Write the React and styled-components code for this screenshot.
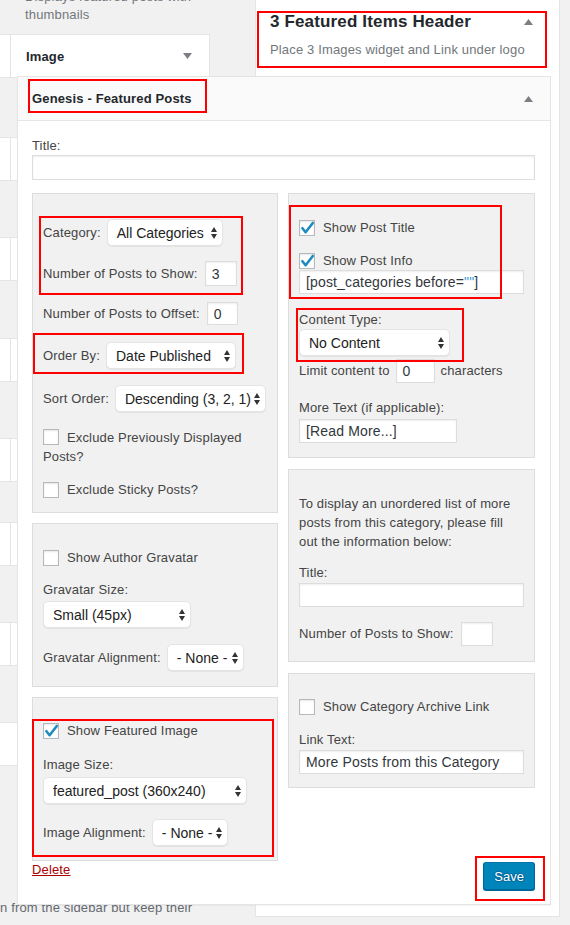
import React from 'react';
import styled, { createGlobalStyle } from 'styled-components';

const GlobalStyle = createGlobalStyle`
  html, body {
    margin: 0;
    padding: 0;
    background: #f1f1f1;
  }
  body {
    font-family: "Liberation Sans", Arial, sans-serif;
    font-size: 13px;
    letter-spacing: 0.15px;
    color: #444;
  }
  * {
    box-sizing: border-box;
  }
`;

const Page = styled.div`
  position: relative;
  width: 570px;
  height: 925px;
  overflow: hidden;
  display: flex;
  align-items: flex-start;
  background: #f1f1f1;
`;

/* available widgets, mostly hidden behind the open widget */
const Available = styled.div`
  width: 255px;
  height: 925px;
  flex-shrink: 0;
  display: flex;
  flex-direction: column;
  padding-bottom: 8px;
`;

const WidgetDesc = styled.p`
  margin: -12px 0 0;
  padding: 0 15px 0 25px;
  line-height: 18px;
  color: #72777c;
`;

const StubRow = styled.div`
  display: grid;
  grid-template-columns: 3px 200px;
  column-gap: 7px;
  height: 44px;
  margin-top: ${p => p.$mt}px;
`;

const Stub = styled.div`
  display: flex;
  align-items: center;
  justify-content: space-between;
  padding: 0 17px 0 15px;
  background: #fff;
  border: 1px solid #e5e5e5;
  border-left: ${p => (p.$edge ? 'none' : '1px solid #e5e5e5')};
  font-weight: bold;
  color: #23282d;
  visibility: ${p => (p.$empty ? 'hidden' : 'visible')};
`;

const BottomNote = styled.div`
  margin-top: auto;
  line-height: 18px;
  color: #646970;
  white-space: nowrap;
`;

/* sidebar */
const Sidebar = styled.div`
  width: 305px;
  flex-shrink: 0;
  background: #fff;
  border: 1px solid #e5e5e5;
  border-top: none;
  padding-bottom: 11px;
`;

const SidebarHead = styled.div`
  padding: 12px 26px 0 14px;
`;

const TitleRow = styled.div`
  display: flex;
  align-items: center;
  justify-content: space-between;
`;

const SidebarTitle = styled.h2`
  margin: 0;
  font-size: 17px;
  line-height: 20px;
  font-weight: bold;
  color: #23282d;
`;

const SidebarDesc = styled.p`
  margin: 9px 0 0;
  line-height: 18px;
  color: #72777c;
`;

const Panel = styled.div`
  width: 534px;
  margin: 17px 0 0 -239px;
  background: #fff;
  border: 1px solid #e5e5e5;
  box-shadow: 0 1px 1px rgba(0, 0, 0, 0.04);
`;

const PanelHead = styled.div`
  height: 44px;
  display: flex;
  align-items: center;
  justify-content: space-between;
  padding: 0 17px 0 14px;
  background: #fafafa;
  border-bottom: 1px solid #e5e5e5;
  font-weight: bold;
  color: #23282d;
`;

const PanelBody = styled.div`
  padding: 16px 15px 14px 14px;
`;

const Columns = styled.div`
  display: grid;
  grid-template-columns: 246px 247px;
  column-gap: 10px;
  align-items: start;
  margin-top: 13px;
`;

const Column = styled.div`
  display: flex;
  flex-direction: column;
  gap: ${p => p.$gap}px;
`;

const Box = styled.div`
  display: flex;
  flex-direction: column;
  align-items: flex-start;
  padding: ${p => p.$pt}px 10px ${p => p.$pb}px;
  background: #f1f1f1;
  border: 1px solid #ddd;
`;

const Row = styled.div`
  display: flex;
  align-items: center;
  gap: ${p => (p.$gap === undefined ? 6 : p.$gap)}px;
  margin-top: ${p => p.$mt || 0}px;
  line-height: 18px;
  white-space: nowrap;
`;

const Label = styled.div`
  margin-top: ${p => p.$mt || 0}px;
  line-height: 18px;
  color: #444;
`;

const Para = styled.p`
  margin: ${p => p.$mt || 0}px 0 0;
  line-height: 19px;
  color: #444;
`;

const InputBox = styled.div`
  display: flex;
  align-items: center;
  flex-shrink: 0;
  width: ${p => (p.$w ? `${p.$w}px` : '100%')};
  height: ${p => p.$h || 24}px;
  margin-top: ${p => p.$mt || 0}px;
  padding: 0 6px;
  background: #fff;
  border: 1px solid #ddd;
  box-shadow: inset 0 1px 2px rgba(0, 0, 0, 0.07);
  font-size: 14px;
  color: #32373c;
  white-space: nowrap;
  overflow: hidden;
`;

const Quote = styled.span`
  color: #3a9ad9;
`;

const SelectBox = styled.div`
  display: flex;
  align-items: center;
  justify-content: space-between;
  flex-shrink: 0;
  width: ${p => p.$w}px;
  height: 27px;
  margin-top: ${p => p.$mt || 0}px;
  padding: 0 5px 0 9px;
  background: #fff;
  border: 1px solid #e4e4e4;
  border-radius: 5px;
  box-shadow: 0 1px 1px rgba(0, 0, 0, 0.06);
  font-size: 14px;
  letter-spacing: 0;
  color: #222;
  white-space: nowrap;
`;

const CheckBox = styled.span`
  display: inline-block;
  flex-shrink: 0;
  width: 16px;
  height: 16px;
  background: #fff;
  border: 1px solid #b4b9be;
  box-shadow: inset 0 1px 2px rgba(0, 0, 0, 0.1);
  vertical-align: ${p => (p.$inline ? 'top' : 'middle')};
  margin: ${p => (p.$inline ? '1px 8px 0 0' : '0')};

  svg {
    display: block;
    margin: -1px 0 0 -1px;
    overflow: visible;
  }
`;

const Actions = styled.div`
  display: flex;
  align-items: flex-start;
  justify-content: space-between;
  margin-top: 1px;
`;

const DeleteLink = styled.a`
  line-height: 16px;
  color: #a00;
  text-decoration: underline;
  cursor: pointer;
`;

const SaveButton = styled.button`
  height: 28px;
  padding: 0 10px;
  font-family: inherit;
  font-size: 13px;
  color: #fff;
  background: #0085ba;
  border: 1px solid #0073aa;
  border-color: #0073aa #006799 #006799;
  border-radius: 3px;
  box-shadow: 0 1px 0 #006799;
  text-shadow: 0 -1px 1px #006799, 1px 0 1px #006799, 0 1px 1px #006799, -1px 0 1px #006799;
  cursor: pointer;
`;

const Annot = styled.div`
  position: absolute;
  left: ${p => p.$x}px;
  top: ${p => p.$y}px;
  width: ${p => p.$w}px;
  height: ${p => p.$h}px;
  border: 2px solid #f00;
  pointer-events: none;
`;

const Tri = ({ dir = 'up' }) => (
  <svg width="9" height="6" viewBox="0 0 9 6" aria-hidden="true">
    <path d={dir === 'up' ? 'M0 6 L4.5 0 L9 6 Z' : 'M0 0 L4.5 6 L9 0 Z'} fill="#7b7f84" />
  </svg>
);

const SelectArrows = () => (
  <svg width="6" height="12" viewBox="0 0 6 12" aria-hidden="true">
    <path d="M0 5 L3 0 L6 5 Z M0 7 L3 12 L6 7 Z" fill="#333" />
  </svg>
);

const Select = ({ w, mt, children }) => (
  <SelectBox $w={w} $mt={mt}>
    <span>{children}</span>
    <SelectArrows />
  </SelectBox>
);

const Check = ({ checked, inline }) => (
  <CheckBox $inline={inline}>
    {checked && (
      <svg width="16" height="16" viewBox="0 0 16 16" aria-hidden="true">
        <polyline
          points="3.4,8.2 6.6,12.2 13.8,3"
          fill="none"
          stroke="#1e8cbe"
          strokeWidth="2.6"
          strokeLinecap="round"
          strokeLinejoin="round"
        />
      </svg>
    )}
  </CheckBox>
);

const stubRows = [
  { mt: 10, label: 'Image' },
  { mt: 59 },
  { mt: 56 },
  { mt: 57 },
  { mt: 56 },
  { mt: 40 },
  { mt: 56 },
  { mt: 56, single: true },
];

const annotations = [
  { x: 257, y: 11, w: 290, h: 57 },
  { x: 28, y: 79, w: 179, h: 34 },
  { x: 39, y: 216, w: 204, h: 79 },
  { x: 33, y: 333, w: 211, h: 41 },
  { x: 289, y: 205, w: 213, h: 94 },
  { x: 296, y: 308, w: 168, h: 54 },
  { x: 32, y: 719, w: 242, h: 138 },
  { x: 475, y: 856, w: 70, h: 45 },
];

const App = () => (
  <>
    <GlobalStyle />
    <Page>
      <Available>
        <WidgetDesc>
          Displays featured posts with
          <br />
          thumbnails
        </WidgetDesc>
        {stubRows.map((row, i) => (
          <StubRow key={i} $mt={row.mt}>
            <Stub $edge />
            <Stub $empty={row.single}>
              {row.label && (
                <>
                  <span>{row.label}</span>
                  <Tri dir="down" />
                </>
              )}
            </Stub>
          </StubRow>
        ))}
        <BottomNote>n from the sidebar but keep their</BottomNote>
      </Available>

      <Sidebar>
        <SidebarHead>
          <TitleRow>
            <SidebarTitle>3 Featured Items Header</SidebarTitle>
            <Tri />
          </TitleRow>
          <SidebarDesc>Place 3 Images widget and Link under logo</SidebarDesc>
        </SidebarHead>

        <Panel>
          <PanelHead>
            <span>Genesis - Featured Posts</span>
            <Tri />
          </PanelHead>
          <PanelBody>
            <Label>Title:</Label>
            <InputBox $h={25} />

            <Columns>
              <Column $gap={10}>
                <Box $pt={25} $pb={13}>
                  <Row>
                    <Label>Category:</Label>
                    <Select w={116}>All Categories</Select>
                  </Row>
                  <Row $mt={15} $gap={7}>
                    <Label>Number of Posts to Show:</Label>
                    <InputBox $w={32} $h={25}>3</InputBox>
                  </Row>
                  <Row $mt={16} $gap={7}>
                    <Label>Number of Posts to Offset:</Label>
                    <InputBox $w={31} $h={23}>0</InputBox>
                  </Row>
                  <Row $mt={17}>
                    <Label>Order By:</Label>
                    <Select w={130}>Date Published</Select>
                  </Row>
                  <Row $mt={16}>
                    <Label>Sort Order:</Label>
                    <Select w={151}>Descending (3, 2, 1)</Select>
                  </Row>
                  <Para $mt={16}>
                    <Check inline />
                    Exclude Previously Displayed Posts?
                  </Para>
                  <Row $mt={15} $gap={8}>
                    <Check />
                    <Label>Exclude Sticky Posts?</Label>
                  </Row>
                </Box>

                <Box $pt={25} $pb={15}>
                  <Row $gap={8}>
                    <Check />
                    <Label>Show Author Gravatar</Label>
                  </Row>
                  <Label $mt={14}>Gravatar Size:</Label>
                  <Select w={148} mt={2}>Small (45px)</Select>
                  <Row $mt={16}>
                    <Label>Gravatar Alignment:</Label>
                    <Select w={77}>- None -</Select>
                  </Row>
                </Box>

                <Box $pt={24} $pb={14}>
                  <Row $gap={8}>
                    <Check checked />
                    <Label>Show Featured Image</Label>
                  </Row>
                  <Label $mt={16}>Image Size:</Label>
                  <Select w={204} mt={3}>featured_post (360x240)</Select>
                  <Row $mt={15}>
                    <Label>Image Alignment:</Label>
                    <Select w={76}>- None -</Select>
                  </Row>
                </Box>
              </Column>

              <Column $gap={11}>
                <Box $pt={25} $pb={14}>
                  <Row $gap={8}>
                    <Check checked />
                    <Label>Show Post Title</Label>
                  </Row>
                  <Row $mt={15} $gap={8}>
                    <Check checked />
                    <Label>Show Post Info</Label>
                  </Row>
                  <InputBox>
                    [post_categories before=<Quote>""</Quote>]
                  </InputBox>
                  <Label $mt={17}>Content Type:</Label>
                  <Select w={151}>No Content</Select>
                  <Row $mt={3} $gap={6}>
                    <Label>Limit content to</Label>
                    <InputBox $w={39}>0</InputBox>
                    <Label>characters</Label>
                  </Row>
                  <Label $mt={16}>More Text (if applicable):</Label>
                  <InputBox $w={158} $mt={2}>[Read More...]</InputBox>
                </Box>

                <Box $pt={24} $pb={15}>
                  <Para>
                    To display an unordered list of more
                    <br />
                    posts from this category, please fill
                    <br />
                    out the information below:
                  </Para>
                  <Label $mt={13}>Title:</Label>
                  <InputBox $mt={1} />
                  <Row $mt={15} $gap={7}>
                    <Label>Number of Posts to Show:</Label>
                    <InputBox $w={32} />
                  </Row>
                </Box>

                <Box $pt={24} $pb={13}>
                  <Row $gap={8}>
                    <Check />
                    <Label>Show Category Archive Link</Label>
                  </Row>
                  <Label $mt={15}>Link Text:</Label>
                  <InputBox $mt={1}>More Posts from this Category</InputBox>
                </Box>
              </Column>
            </Columns>

            <Actions>
              <DeleteLink>Delete</DeleteLink>
              <SaveButton type="button">Save</SaveButton>
            </Actions>
          </PanelBody>
        </Panel>
      </Sidebar>

      {annotations.map((a, i) => (
        <Annot key={i} $x={a.x} $y={a.y} $w={a.w} $h={a.h} />
      ))}
    </Page>
  </>
);

export default App;
